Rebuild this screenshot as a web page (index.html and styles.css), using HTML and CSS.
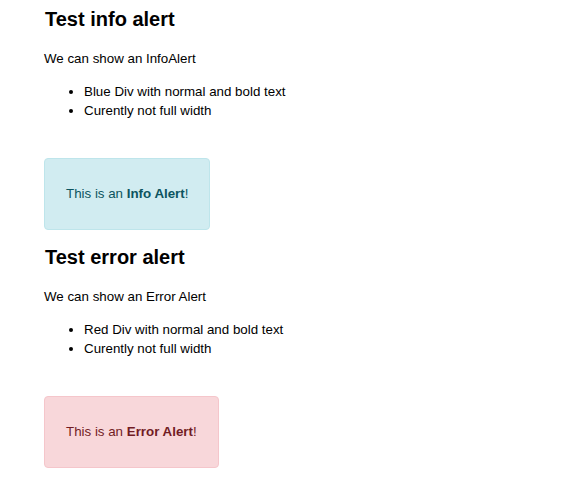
FILE: index.html
```html
<!DOCTYPE html>
<html>
<head>
<meta charset="utf-8">
<link rel="stylesheet" href="styles.css">
</head>
<body>
<main class="page">
  <section class="section">
    <h1 class="title">Test info alert</h1>
    <p class="desc">We can show an InfoAlert</p>
    <ul class="list">
      <li>Blue Div with normal and bold text</li>
      <li>Curently not full width</li>
    </ul>
    <div class="alert alert-info">This is an <b>Info Alert</b>!</div>
  </section>
  <section class="section">
    <h1 class="title">Test error alert</h1>
    <p class="desc">We can show an Error Alert</p>
    <ul class="list">
      <li>Red Div with normal and bold text</li>
      <li>Curently not full width</li>
    </ul>
    <div class="alert alert-error">This is an <b>Error Alert</b>!</div>
  </section>
</main>
</body>
</html>
```
FILE: styles.css
```css
html, body {
  margin: 0;
  background: #fff;
}
body {
  font-family: "Liberation Sans", Arial, sans-serif;
  font-size: 13.33px;
  line-height: 19px;
  color: #000;
}
.page {
  padding: 7px 44px 0;
}
.section {
  margin-bottom: 15px;
}
.title {
  font-size: 20px;
  line-height: 25px;
  font-weight: bold;
  margin: 0 0 17px 1px;
}
.desc {
  margin: 0;
}
.list {
  margin: 14px 0 38px;
  padding-left: 40px;
}
.alert {
  width: fit-content;
  border: 1px solid;
  border-radius: 4px;
  padding: 25px 21px 25px;
  line-height: 20px;
}
.alert-info {
  background: #d1ecf1;
  border-color: #bee5eb;
  color: #0c5460;
}
.alert-error {
  background: #f8d7da;
  border-color: #f5c6cb;
  color: #721c24;
}
```
